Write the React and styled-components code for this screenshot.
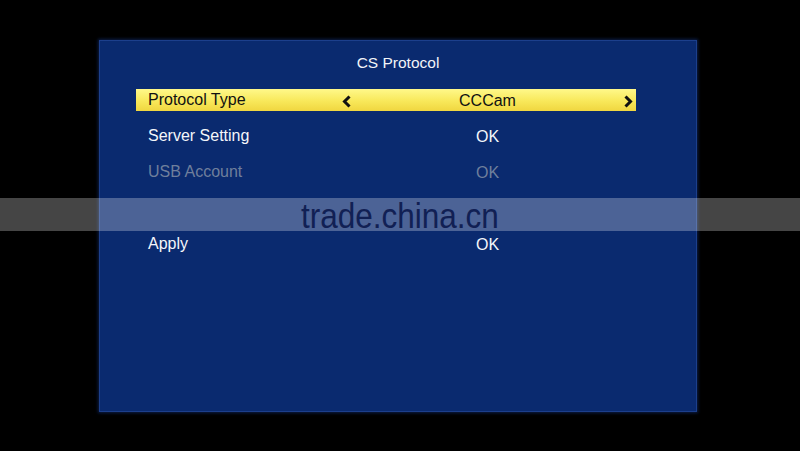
import styled, { createGlobalStyle } from "styled-components";

const Global = createGlobalStyle`
  html, body {
    margin: 0;
    padding: 0;
    background: #000;
    width: 800px;
    height: 451px;
    overflow: hidden;
    font-family: "Liberation Sans", Arial, sans-serif;
  }
`;

const Screen = styled.div`
  position: relative;
  width: 800px;
  height: 451px;
  background: #000;
  padding: 40px 0 0 99px;
  box-sizing: border-box;
`;

const Panel = styled.div`
  width: 598px;
  height: 372px;
  box-sizing: border-box;
  background: #0a2a6f;
  border: 1px solid #1c3f8c;
  box-shadow: 0 0 3px 1px rgba(20, 50, 120, 0.6);
  display: flex;
  flex-direction: column;
  align-items: center;
  padding-top: 13px;
`;

const Title = styled.div`
  color: #f2f4f8;
  font-size: 15.5px;
  line-height: 18px;
  height: 18px;
`;

const List = styled.div`
  margin-top: 17px;
  align-self: flex-start;
  margin-left: 36px;
  width: 500px;
  display: flex;
  flex-direction: column;
  gap: 14px;
`;

const Row = styled.div`
  height: 22px;
  display: grid;
  grid-template-columns: 200px 300px;
  align-items: center;
  font-size: 16px;
  color: ${(p) => (p.$active ? "#111" : p.$disabled ? "#6f7f9c" : "#f4f6fa")};
  background: ${(p) =>
    p.$active ? "linear-gradient(#fff88a, #f8e85a 55%, #f0d640)" : "transparent"};
`;

const Label = styled.span`
  padding-left: 12px;
`;

const Value = styled.div`
  display: flex;
  align-items: center;
  justify-content: ${(p) => (p.$arrows ? "space-between" : "center")};
  padding: 2px 3px 0 6px;
`;

const Chevron = styled.svg`
  width: 10px;
  height: 13px;
  display: block;
`;

const Band = styled.div`
  position: absolute;
  left: 0;
  top: 198px;
  width: 800px;
  height: 33px;
  background: rgba(255, 255, 255, 0.27);
  display: flex;
  align-items: center;
  justify-content: center;
`;

const Mark = styled.span`
  color: #112054;
  font-size: 35px;
  line-height: 33px;
  transform: scaleX(0.9);
  margin-top: 1px;
`;

const Left = () => (
  <Chevron viewBox="0 0 10 13">
    <polyline points="7.5,1.5 2.5,6.5 7.5,11.5" fill="none" stroke="#111" strokeWidth="3" />
  </Chevron>
);

const Right = () => (
  <Chevron viewBox="0 0 10 13">
    <polyline points="2.5,1.5 7.5,6.5 2.5,11.5" fill="none" stroke="#111" strokeWidth="3" />
  </Chevron>
);

const rows = [
  { label: "Server Setting", value: "OK" },
  { label: "USB Account", value: "OK", disabled: true },
  { label: "", value: "" },
  { label: "Apply", value: "OK" },
];

export default function App() {
  return (
    <Screen>
      <Global />
      <Panel>
        <Title>CS Protocol</Title>
        <List>
          <Row $active>
            <Label>Protocol Type</Label>
            <Value $arrows>
              <Left />
              <span>CCCam</span>
              <Right />
            </Value>
          </Row>
          {rows.map((r, i) => (
            <Row key={i} $disabled={r.disabled}>
              <Label>{r.label}</Label>
              <Value>{r.value}</Value>
            </Row>
          ))}
        </List>
      </Panel>
      <Band>
        <Mark>trade.china.cn</Mark>
      </Band>
    </Screen>
  );
}
